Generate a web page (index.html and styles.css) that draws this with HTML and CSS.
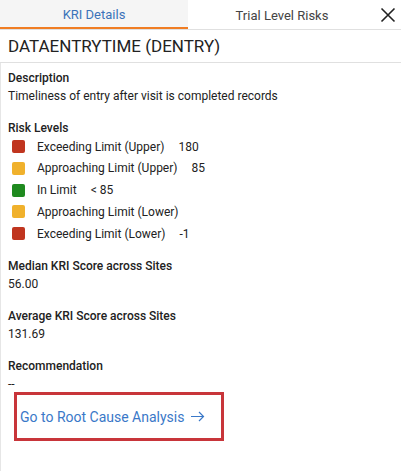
FILE: index.html
```html
<!DOCTYPE html>
<html>
<head>
<meta charset="utf-8">
<link rel="stylesheet" href="styles.css">
</head>
<body>
<div class="panel">
  <div class="tabs">
    <div class="tab active">KRI Details</div>
    <div class="tab">Trial Level Risks</div>
    <div class="close">
      <svg width="16" height="16" viewBox="0 0 16 16"><path d="M1.5 1.5 L14.5 14.5 M14.5 1.5 L1.5 14.5" stroke="#222" stroke-width="1.6" fill="none"/></svg>
    </div>
  </div>
  <div class="title">DATAENTRYTIME (DENTRY)</div>
  <div class="body">
    <div class="section">
      <div class="label">Description</div>
      <div class="value">Timeliness of entry after visit is completed records</div>
    </div>
    <div class="section risk">
      <div class="label">Risk Levels</div>
      <div class="levels">
        <div class="level"><span class="sq red"></span><span class="name">Exceeding Limit (Upper)</span><span class="num">180</span></div>
        <div class="level"><span class="sq amber"></span><span class="name">Approaching Limit (Upper)</span><span class="num">85</span></div>
        <div class="level"><span class="sq green"></span><span class="name">In Limit</span><span class="num">&lt; 85</span></div>
        <div class="level"><span class="sq amber"></span><span class="name">Approaching Limit (Lower)</span></div>
        <div class="level"><span class="sq red"></span><span class="name">Exceeding Limit (Lower)</span><span class="num">-1</span></div>
      </div>
    </div>
    <div class="section">
      <div class="label">Median KRI Score across Sites</div>
      <div class="value">56.00</div>
    </div>
    <div class="section">
      <div class="label">Average KRI Score across Sites</div>
      <div class="value">131.69</div>
    </div>
    <div class="section">
      <div class="label">Recommendation</div>
      <div class="value">--</div>
    </div>
    <div class="cta">
      <a class="link">Go to Root Cause Analysis
        <svg width="15" height="11" viewBox="0 0 15 11"><path d="M1 5.5 H13.5 M9 1 L13.5 5.5 L9 10" stroke="#3a78c8" stroke-width="1.2" fill="none"/></svg>
      </a>
    </div>
  </div>
</div>
</body>
</html>
```
FILE: styles.css
```css
* { box-sizing: border-box; }
html, body { margin: 0; padding: 0; background: #fff; }
body { font-family: Roboto, "Noto Sans", sans-serif; color: #222; width: 401px; height: 471px; overflow: hidden; }
.panel { display: flex; flex-direction: column; height: 471px; }
.tabs { display: flex; height: 30px; border-bottom: 1px solid #e0e0e0; }
.tab { width: 188px; display: flex; align-items: center; justify-content: center; font-size: 13px; color: #444; padding-top: 1px; }
.tab.active { background: #f5f5f5; color: #3b73b9; border-bottom: 2px solid #f07d23; }
.close { flex: 1; display: flex; align-items: center; justify-content: flex-end; padding-right: 5px; }
.title { font-size: 17px; padding: 0 8px; height: 33px; display: flex; align-items: center; border-bottom: 1px solid #e0e0e0; color: #222; }
.body { flex: 1; border-left: 1px solid #e6e6e6; padding: 6px 7px 0; }
.section { margin-bottom: 14px; }
.section.risk { margin-bottom: 16px; }
.label { font-size: 12px; font-weight: 500; line-height: 18px; }
.value { font-size: 12px; line-height: 18px; }
.levels { display: flex; flex-direction: column; gap: 6.75px; padding-top: 2px; padding-left: 4px; }
.level { display: flex; align-items: center; font-size: 12px; height: 15px; }
.sq { width: 13px; height: 13px; border-radius: 2px; margin-right: 12px; }
.red { background: #c0351f; }
.amber { background: #f0b12c; }
.green { background: #1f8a1f; }
.num { margin-left: 14px; }
.cta { margin-left: 6px; margin-top: -15px; width: 210px; height: 49px; border: 3px solid #c8353a; display: flex; align-items: center; padding-left: 3px; }
.link { color: #3a78c8; font-size: 14px; display: flex; align-items: center; gap: 6px; }
```
